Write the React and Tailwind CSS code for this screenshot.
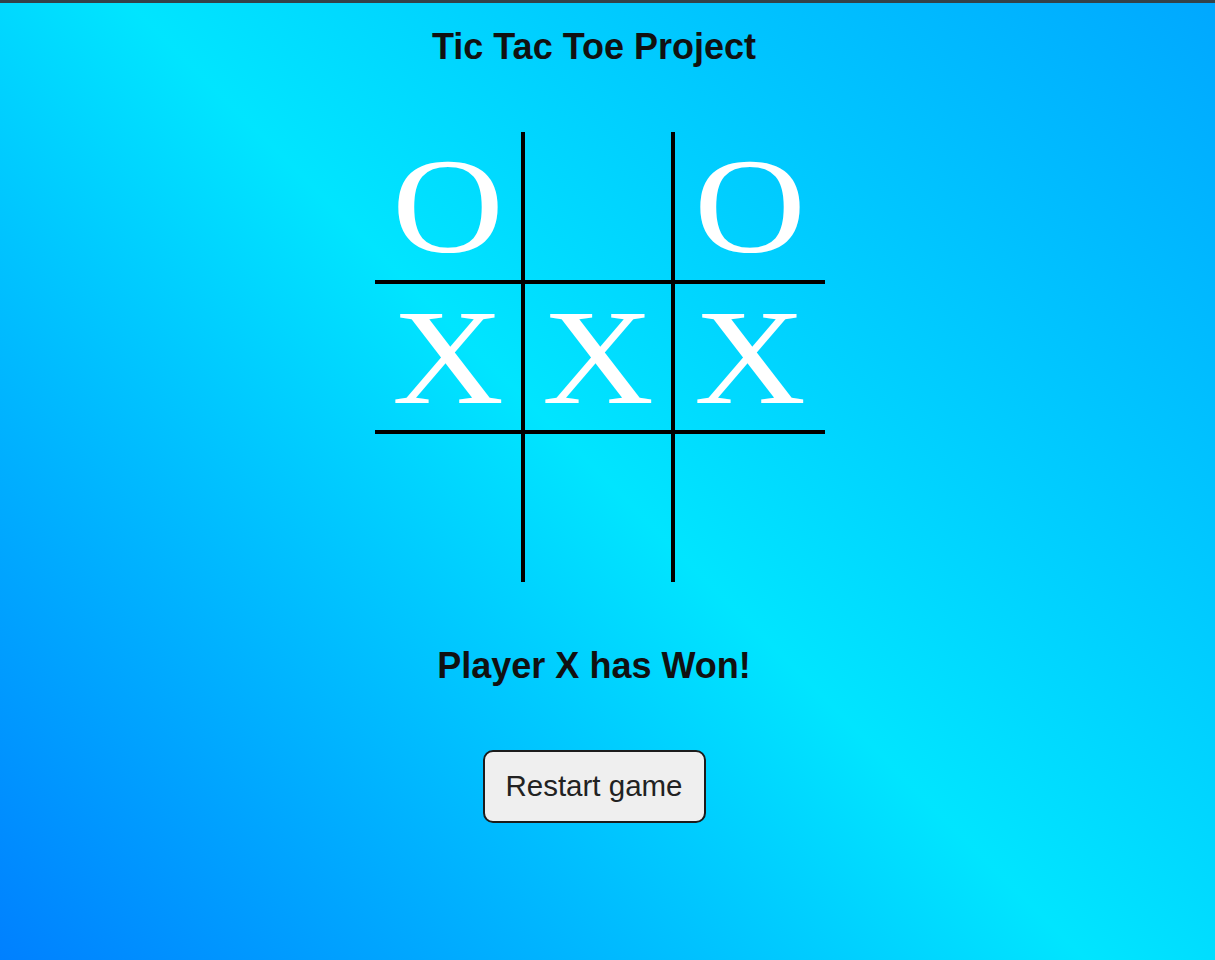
import React from "react";

const board = ["O", "", "O", "X", "X", "X", "", "", ""];
const rowH = ["h-[152px]", "h-[150px]", "h-[148px]"];

export default function App() {
  return (
    <div
      className="w-[1215px] h-[960px] overflow-hidden bg-[linear-gradient(45deg,#0080ff_0%,#00e5ff_50%,#00a8ff_100%)] border-t-[3px] border-[#33424a] text-[#111]"
      style={{ fontFamily: '"Liberation Sans", Arial, sans-serif' }}
    >
      <div className="w-[1188px] flex flex-col items-center">
        <h1 className="mt-[24px] text-[36px] leading-[40px] font-bold">Tic Tac Toe Project</h1>
        <div className="mt-[65px] ml-[12px] grid grid-cols-3 w-[450px]">
          {board.map((v, i) => {
            const col = i % 3;
            const row = Math.floor(i / 3);
            return (
              <div
                key={i}
                className={
                  "flex items-center justify-center border-black " +
                  rowH[row] +
                  " " +
                  (col < 2 ? "border-r-4 " : "") +
                  (row < 2 ? "border-b-4 " : "")
                }
              >
                <span
                  className="inline-block text-white text-[136px] leading-[136px] scale-x-[1.14]"
                  style={{ fontFamily: '"Liberation Serif", "Times New Roman", serif' }}
                >
                  {v}
                </span>
              </div>
            );
          })}
        </div>
        <h2 className="mt-[64px] text-[36px] leading-[40px] font-bold">Player X has Won!</h2>
        <button className="mt-[64px] w-[223px] h-[73px] bg-[#efefef] border-2 border-[#1c1c1c] rounded-[10px] text-[29.5px] text-[#222]">
          Restart game
        </button>
      </div>
    </div>
  );
}
